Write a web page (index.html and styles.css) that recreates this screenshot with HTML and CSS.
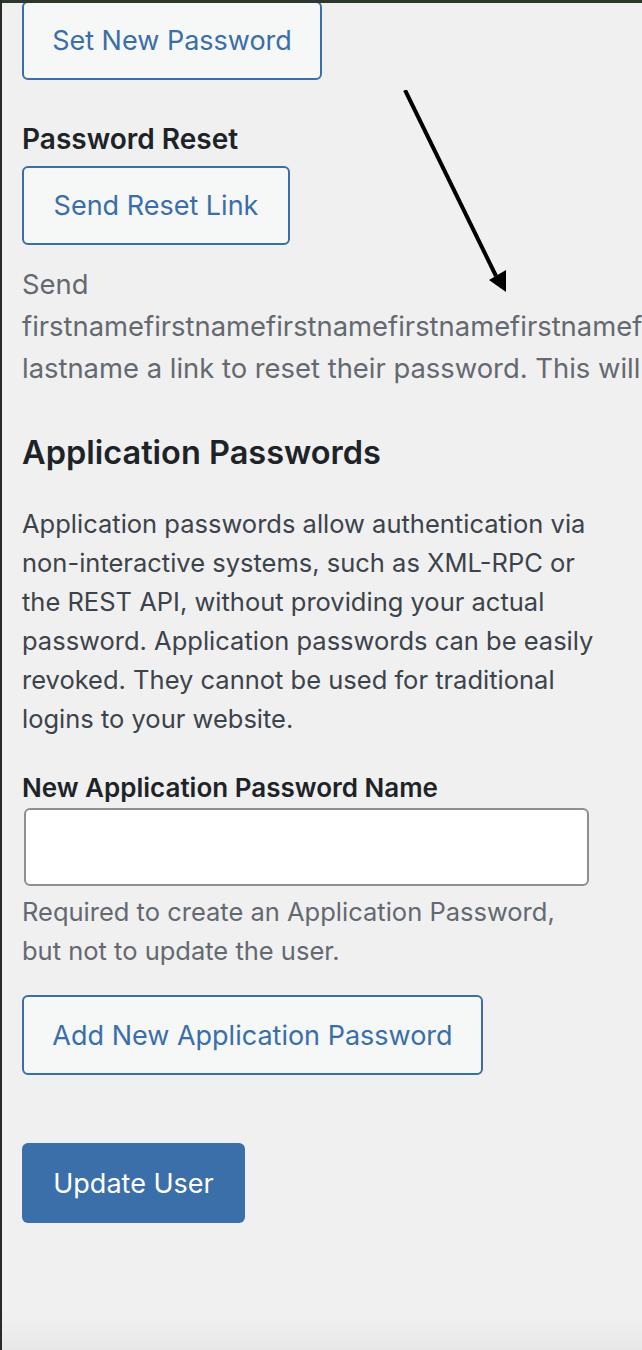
FILE: index.html
```html
<!DOCTYPE html>
<html lang="en">
<head>
<meta charset="utf-8">
<title>Edit User</title>
<link rel="stylesheet" href="styles.css">
</head>
<body>
<div class="frame-top"></div>
<main class="page">
  <button class="btn btn-secondary btn-first" type="button">Set New Password</button>

  <div class="field-label field-label-reset">Password Reset</div>
  <button class="btn btn-secondary btn-reset" type="button">Send Reset Link</button>
  <p class="reset-desc">Send firstnamefirstnamefirstnamefirstnamefirstnamefirstnamefirstnamefirstname lastname a link to reset their password. This will also log them out.</p>

  <h2 class="section-title">Application Passwords</h2>
  <p class="section-text">Application passwords allow authentication via non-interactive systems, such as XML-RPC or the REST API, without providing your actual password. Application passwords can be easily revoked. They cannot be used for traditional logins to your website.</p>

  <label class="field-label field-label-app" for="app-name">New Application Password Name</label>
  <input class="text-input" id="app-name" type="text">
  <p class="field-desc">Required to create an Application Password, but not to update the user.</p>

  <button class="btn btn-secondary btn-add" type="button">Add New Application Password</button>

  <button class="btn btn-primary" type="button">Update User</button>
</main>
<svg class="arrow" width="120" height="220" viewBox="0 0 120 220" aria-hidden="true">
  <line x1="3" y1="0" x2="94" y2="186" stroke="#000" stroke-width="4"/>
  <polygon points="87,190 104,180 104,202" fill="#000"/>
</svg>
<div class="frame-bottom"></div>
</body>
</html>
```

FILE: styles.css
```css
html, body {
  margin: 0;
  padding: 0;
}

body {
  background: #f0f0f1;
  border-left: 2px solid #2a2a2a;
  min-height: 1350px;
  box-sizing: border-box;
  overflow: hidden;
  position: relative;
  font-family: Inter, "Noto Sans", "Liberation Sans", sans-serif;
  color: #3c434a;
}

.frame-top {
  position: absolute;
  left: -2px;
  top: 0;
  width: 644px;
  height: 3px;
  background: #2e372c;
  z-index: 3;
}

.frame-bottom {
  position: absolute;
  left: 0;
  right: 0;
  top: 1318px;
  height: 32px;
  background: linear-gradient(#f0f0f1, #e7e7e8);
}

.page {
  display: flex;
  flex-direction: column;
  align-items: flex-start;
  padding: 1px 0 0 20px;
}

.btn {
  box-sizing: border-box;
  height: 79px;
  padding: 0;
  border-radius: 6px;
  font-family: inherit;
  font-size: 27px;
  line-height: 1;
  text-align: center;
  white-space: nowrap;
  cursor: pointer;
}

.btn-secondary {
  background: #f6f7f7;
  border: 2px solid #3a6ea8;
  color: #3a6ea8;
}

.btn-first {
  width: 300px;
}

.btn-reset {
  width: 268px;
  margin-top: 9px;
}

.btn-add {
  width: 461px;
  height: 80px;
  margin-top: 25px;
}

.btn-primary {
  width: 223px;
  height: 80px;
  margin-top: 68px;
  background: #3b6fa9;
  border: 0;
  color: #fff;
}

.field-label {
  display: block;
  font-weight: 600;
  line-height: 36px;
  color: #1d2327;
}

.field-label-reset {
  margin-top: 41px;
  font-size: 28px;
}

.field-label-app {
  margin-top: 32px;
  font-size: 26px;
}

.reset-desc {
  width: 900px;
  margin: 18px 0 0;
  font-size: 27.4px;
  line-height: 42px;
  color: #646970;
}

.section-title {
  margin: 44px 0 0;
  font-size: 32.5px;
  font-weight: 600;
  line-height: 40px;
  color: #1d2327;
}

.section-text {
  width: 572px;
  margin: 31px 0 0;
  font-size: 25.5px;
  line-height: 39px;
  color: #3c434a;
}

.text-input {
  box-sizing: border-box;
  width: 565px;
  height: 78px;
  margin: 2px 0 0 2px;
  border: 2px solid #8c8f94;
  border-radius: 6px;
  background: #fff;
}

.field-desc {
  width: 572px;
  margin: 6px 0 0;
  font-size: 25.5px;
  line-height: 39px;
  color: #646970;
}

.arrow {
  position: absolute;
  left: 400px;
  top: 90px;
  z-index: 2;
}
```
